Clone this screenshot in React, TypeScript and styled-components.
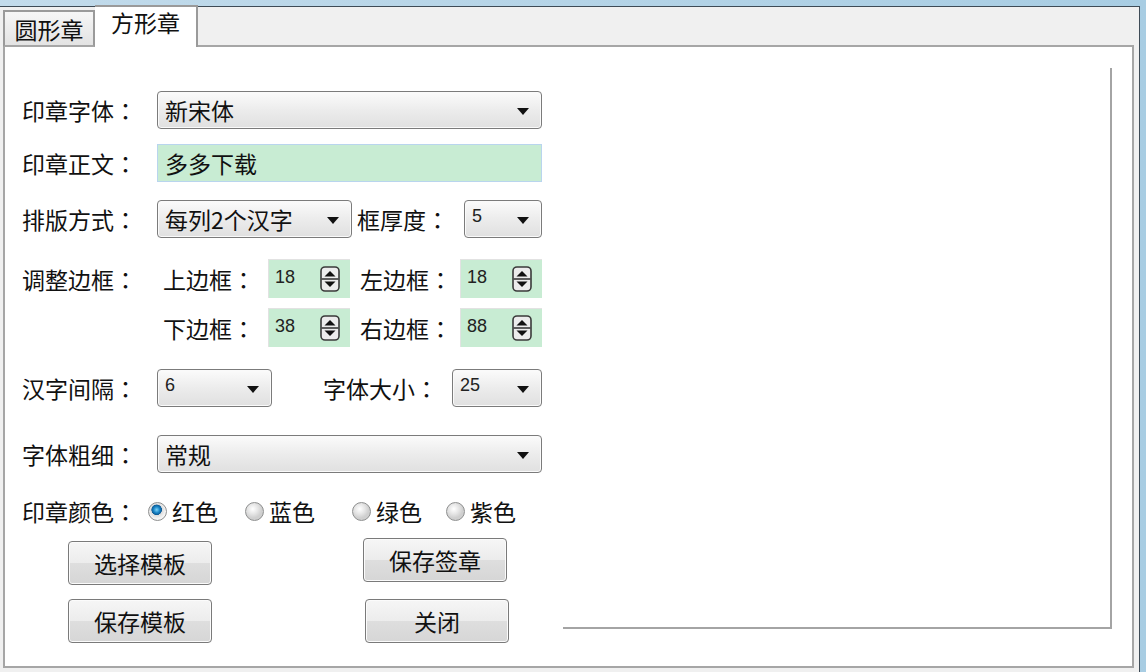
import React from "react";
import styled, { createGlobalStyle } from "styled-components";

const GlobalStyle = createGlobalStyle`
	html, body {
		margin: 0;
		padding: 0;
	}
	body {
		width: 1146px;
		height: 672px;
		overflow: hidden;
		font-family: "Noto Sans CJK SC", "Noto Sans", sans-serif;
		font-size: 23px;
		color: #111;
	}
	* {
		box-sizing: border-box;
	}
`;

const SpinIcon: React.FC = () => (
	<svg width="20" height="26" viewBox="0 0 20 26">
		<rect x="1" y="1" width="18" height="24" rx="4" fill="#ececec" stroke="#3a3a3a" strokeWidth="1.6" />
		<line x1="1.5" y1="13" x2="18.5" y2="13" stroke="#3a3a3a" strokeWidth="1.6" />
		<path d="M4.5 10.5 L10 5 L15.5 10.5 Z" fill="#111" />
		<path d="M4.5 15.5 L10 21 L15.5 15.5 Z" fill="#111" />
	</svg>
);

// 标签文字 + 居中的全角冒号
const Text: React.FC<{ t: string }> = ({ t }) => (
	<>
		{t}
		<Colon>：</Colon>
	</>
);

const App: React.FC = () => {
	const colors = [
		{ name: "红色", checked: true, w: 97 },
		{ name: "蓝色", checked: false, w: 107 },
		{ name: "绿色", checked: false, w: 94 },
		{ name: "紫色", checked: false, w: 0 },
	];
	return (
		<>
			<GlobalStyle />
			<Frame>
				<Client>
					<TabStrip>
						<Tab>圆形章</Tab>
						<Tab $active>方形章</Tab>
					</TabStrip>
					<Panel>
						<FormCol>
							<Row $h={38} $mt={0}>
								<Label><Text t="印章字体" /></Label>
								<Combo $w={385}>
									<ComboText>新宋体</ComboText>
									<Arrow />
								</Combo>
							</Row>
							<Row $h={38} $mt={15}>
								<Label><Text t="印章正文" /></Label>
								<TextBox>多多下载</TextBox>
							</Row>
							<Row $h={38} $mt={18}>
								<Label><Text t="排版方式" /></Label>
								<Combo $w={195}>
									<ComboText>每列2个汉字</ComboText>
									<Arrow />
								</Combo>
								<InlineLabel $w={107} $ml={5}><Text t="框厚度" /></InlineLabel>
								<Combo $w={78}>
									<NumText>5</NumText>
									<Arrow />
								</Combo>
							</Row>
							<Row $h={39} $mt={21}>
								<Label><Text t="调整边框" /></Label>
								<InlineLabel $w={105} $ml={6}><Text t="上边框" /></InlineLabel>
								<Spin>
									<NumText>18</NumText>
									<SpinIcon />
								</Spin>
								<InlineLabel $w={100} $ml={10}><Text t="左边框" /></InlineLabel>
								<Spin>
									<NumText>18</NumText>
									<SpinIcon />
								</Spin>
							</Row>
							<Row $h={39} $mt={10}>
								<Label />
								<InlineLabel $w={105} $ml={6}><Text t="下边框" /></InlineLabel>
								<Spin>
									<NumText>38</NumText>
									<SpinIcon />
								</Spin>
								<InlineLabel $w={100} $ml={10}><Text t="右边框" /></InlineLabel>
								<Spin>
									<NumText>88</NumText>
									<SpinIcon />
								</Spin>
							</Row>
							<Row $h={38} $mt={22}>
								<Label><Text t="汉字间隔" /></Label>
								<Combo $w={115}>
									<NumText>6</NumText>
									<Arrow />
								</Combo>
								<InlineLabel $w={129} $ml={51}><Text t="字体大小" /></InlineLabel>
								<Combo $w={90}>
									<NumText>25</NumText>
									<Arrow />
								</Combo>
							</Row>
							<Row $h={38} $mt={28}>
								<Label><Text t="字体粗细" /></Label>
								<Combo $w={385}>
									<ComboText>常规</ComboText>
									<Arrow />
								</Combo>
							</Row>
							<Row $h={30} $mt={23}>
								<InlineLabel $w={126} $ml={0}><Text t="印章颜色" /></InlineLabel>
								{colors.map((c) => (
									<RadioItem key={c.name} $w={c.w}>
										<Radio $checked={c.checked} />
										{c.name}
									</RadioItem>
								))}
							</Row>
							<Buttons>
								<Button>选择模板</Button>
								<Button $up>保存签章</Button>
								<Button>保存模板</Button>
								<Button $shift>关闭</Button>
							</Buttons>
						</FormCol>
						<Preview />
					</Panel>
				</Client>
			</Frame>
		</>
	);
};

export default App;

const Frame = styled.div`
	width: 1146px;
	height: 672px;
	padding: 6px 6px 0 0;
	background: linear-gradient(to right, #c2dbeb, #a8cde3);
`;
const Client = styled.div`
	height: 100%;
	display: flex;
	flex-direction: column;
	padding: 0 5px 4px 3px;
	background: #f0f0f0;
	border-top: 1px solid #3e4b56;
	border-right: 1px solid #3e4b56;
`;
const TabStrip = styled.div`
	display: flex;
	align-items: flex-end;
	height: 40px;
	position: relative;
	z-index: 1;
	margin-bottom: -2px;
`;
const Tab = styled.div<{ $active?: boolean }>`
	display: flex;
	justify-content: center;
	align-items: flex-start;
	width: ${(p) => (p.$active ? 103 : 92)}px;
	height: ${(p) => (p.$active ? 42 : 37)}px;
	padding-top: ${(p) => (p.$active ? 1 : 3)}px;
	font-size: 23px;
	line-height: 28px;
	border: 2px solid #9a9a9a;
	border-bottom: ${(p) => (p.$active ? "none" : "2px solid #a6a6a6")};
	border-left-width: ${(p) => (p.$active ? 0 : 2)}px;
	background: ${(p) =>
		p.$active ? "#fff" : "linear-gradient(#f6f6f6, #e3e3e3)"};
`;
const Panel = styled.div`
	flex: 1;
	display: flex;
	align-items: flex-start;
	padding: 21px 20px 0 17px;
	background: #fff;
	border: 2px solid #a6a6a6;
`;
const FormCol = styled.div`
	width: 520px;
	margin-top: 23px;
	display: flex;
	flex-direction: column;
`;
const Preview = styled.div`
	flex: 1;
	height: 561px;
	margin-left: 21px;
	border-right: 2px solid #a4a4a4;
	border-bottom: 2px solid #a4a4a4;
`;
const Row = styled.div<{ $h: number; $mt: number }>`
	display: flex;
	align-items: center;
	height: ${(p) => p.$h}px;
	margin-top: ${(p) => p.$mt}px;
`;
const Colon = styled.span`
	font-family: "Noto Sans CJK TC", "Noto Sans CJK SC", sans-serif;
`;
const Label = styled.div`
	width: 135px;
	flex: none;
	white-space: nowrap;
`;
const InlineLabel = styled.div<{ $w: number; $ml: number }>`
	width: ${(p) => p.$w}px;
	margin-left: ${(p) => p.$ml}px;
	flex: none;
	white-space: nowrap;
`;
const Combo = styled.div<{ $w: number }>`
	position: relative;
	display: flex;
	align-items: center;
	width: ${(p) => p.$w}px;
	height: 38px;
	flex: none;
	padding-left: 7px;
	border: 1px solid #7b7b7b;
	border-radius: 4px;
	background: linear-gradient(#fbfbfb, #ececec 50%, #e0e0e0);
	box-shadow: inset 0 0 0 1px #fafafa;
`;
const ComboText = styled.span`
	line-height: 1;
`;
const NumText = styled.span`
	font-family: "Liberation Sans", "DejaVu Sans", sans-serif;
	font-size: 18px;
	color: #222;
	margin-top: -6px;
`;
const Arrow = styled.span`
	position: absolute;
	right: 12px;
	top: 16px;
	width: 0;
	height: 0;
	border-left: 6px solid transparent;
	border-right: 6px solid transparent;
	border-top: 7px solid #111;
`;
const TextBox = styled.div`
	display: flex;
	align-items: center;
	width: 385px;
	height: 38px;
	padding-left: 7px;
	background: #c8ecd3;
	border: 1px solid #b9d5ee;
`;
const Spin = styled.div`
	display: flex;
	align-items: center;
	justify-content: space-between;
	width: 82px;
	height: 39px;
	flex: none;
	padding: 0 10px 0 6px;
	background: #c8ecd3;
	border-top: 1px solid #e2e2e2;
	border-left: 1px solid #e2e2e2;
	& > span {
		margin-top: -4px;
	}
`;
const RadioItem = styled.label<{ $w: number }>`
	display: flex;
	align-items: center;
	gap: 5px;
	width: ${(p) => (p.$w ? `${p.$w}px` : "auto")};
	flex: none;
	white-space: nowrap;
`;
const Radio = styled.span<{ $checked?: boolean }>`
	width: 19px;
	height: 19px;
	border-radius: 50%;
	flex: none;
	border: 1px solid #8e8f8f;
	background: ${(p) =>
		p.$checked
			? "radial-gradient(circle at 45% 40%, #7fd3f7 0, #1a86c8 3px, #0d5b96 5px, #dcdcdc 5.5px, #f4f4f4 9px)"
			: "radial-gradient(circle at 40% 35%, #ffffff 0, #e6e6e6 5px, #cfcfcf 9px)"};
`;
const Buttons = styled.div`
	display: grid;
	grid-template-columns: 144px 144px;
	grid-auto-rows: 44px;
	column-gap: 151px;
	row-gap: 14px;
	margin-top: 15px;
	padding-left: 46px;
`;
const Button = styled.button<{ $up?: boolean; $shift?: boolean }>`
	font-family: "Noto Sans CJK SC", sans-serif;
	font-size: 23px;
	color: #111;
	padding: 0;
	border: 1px solid #7a7a7a;
	border-radius: 4px;
	background: linear-gradient(#f6f6f6, #ececec 50%, #dedede 51%, #d6d6d6);
	box-shadow: inset 0 0 0 1px #fbfbfb;
	transform: translate(${(p) => (p.$shift ? 2 : 0)}px, ${(p) => (p.$up ? -3 : 0)}px);
`;
